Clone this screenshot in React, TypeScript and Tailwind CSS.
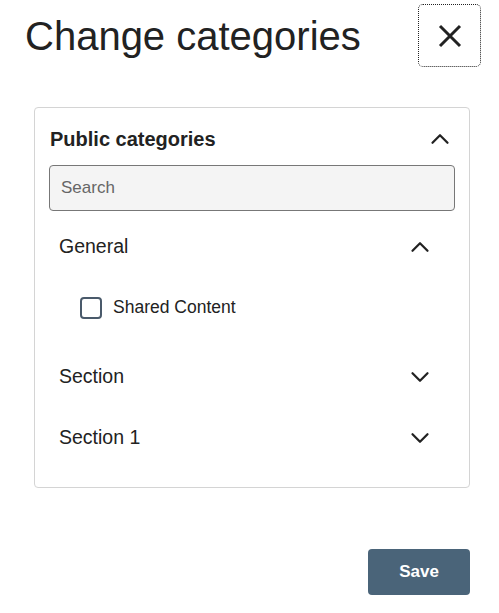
import { ChevronUp, ChevronDown } from "lucide-react";

const font = { fontFamily: '"Liberation Sans", Arial, sans-serif' };

function SubRow({ label, open }: { label: string; open?: boolean }) {
  const Icon = open ? ChevronUp : ChevronDown;
  return (
    <div className="flex h-[61px] items-center justify-between pl-[10px] pr-[20px]">
      <span className="text-[19.5px] text-[#222]">{label}</span>
      <Icon className="h-[30px] w-[30px] text-[#222]" strokeWidth={1.8} />
    </div>
  );
}

export default function App() {
  return (
    <div className="min-h-screen w-[499px] bg-white" style={font}>
      {/* Header */}
      <div className="flex items-center justify-between pl-[25px] pr-[18px] pt-[4px]">
        <h1 className="text-[40px] leading-none text-[#222]">Change categories</h1>
        <button className="flex h-[63px] w-[63px] items-center justify-center rounded-[5px] border border-dotted border-[#222]">
          <svg width="24" height="24" viewBox="0 0 24 24" className="text-[#222]">
            <path d="M2 2L22 22M22 2L2 22" stroke="currentColor" strokeWidth="3" />
          </svg>
        </button>
      </div>

      {/* Categories card */}
      <div className="ml-[34px] mr-[29px] mt-[40px] rounded-[4px] border border-[#d4d4d4] px-[14px] pb-[19px] pt-[17px]">
        <div className="flex h-[28px] items-center justify-between">
          <span className="pl-[1px] text-[20px] font-bold text-[#222]">Public categories</span>
          <ChevronUp className="h-[30px] w-[30px] text-[#222]" strokeWidth={1.8} />
        </div>

        <input
          placeholder="Search"
          className="mt-[12px] h-[46px] w-full rounded-[4px] border border-[#777] bg-[#f4f4f4] px-[11px] text-[17px] text-[#222] outline-none placeholder:text-[#666]"
        />

        <div className="mt-[5px]">
          <SubRow label="General" open />
          <div className="mb-[8px] flex h-[61px] items-center gap-[11px] pl-[31px]">
            <span className="h-[22px] w-[22px] rounded-[4px] border-2 border-[#4a5a6b]" />
            <span className="text-[17.5px] text-[#222]">Shared Content</span>
          </div>
          <SubRow label="Section" />
          <SubRow label="Section 1" />
        </div>
      </div>

      {/* Footer */}
      <div className="mr-[29px] mt-[61px] flex justify-end">
        <button className="h-[46px] w-[102px] rounded-[4px] bg-[#4a6479] text-[17px] font-bold text-white">
          Save
        </button>
      </div>
    </div>
  );
}
